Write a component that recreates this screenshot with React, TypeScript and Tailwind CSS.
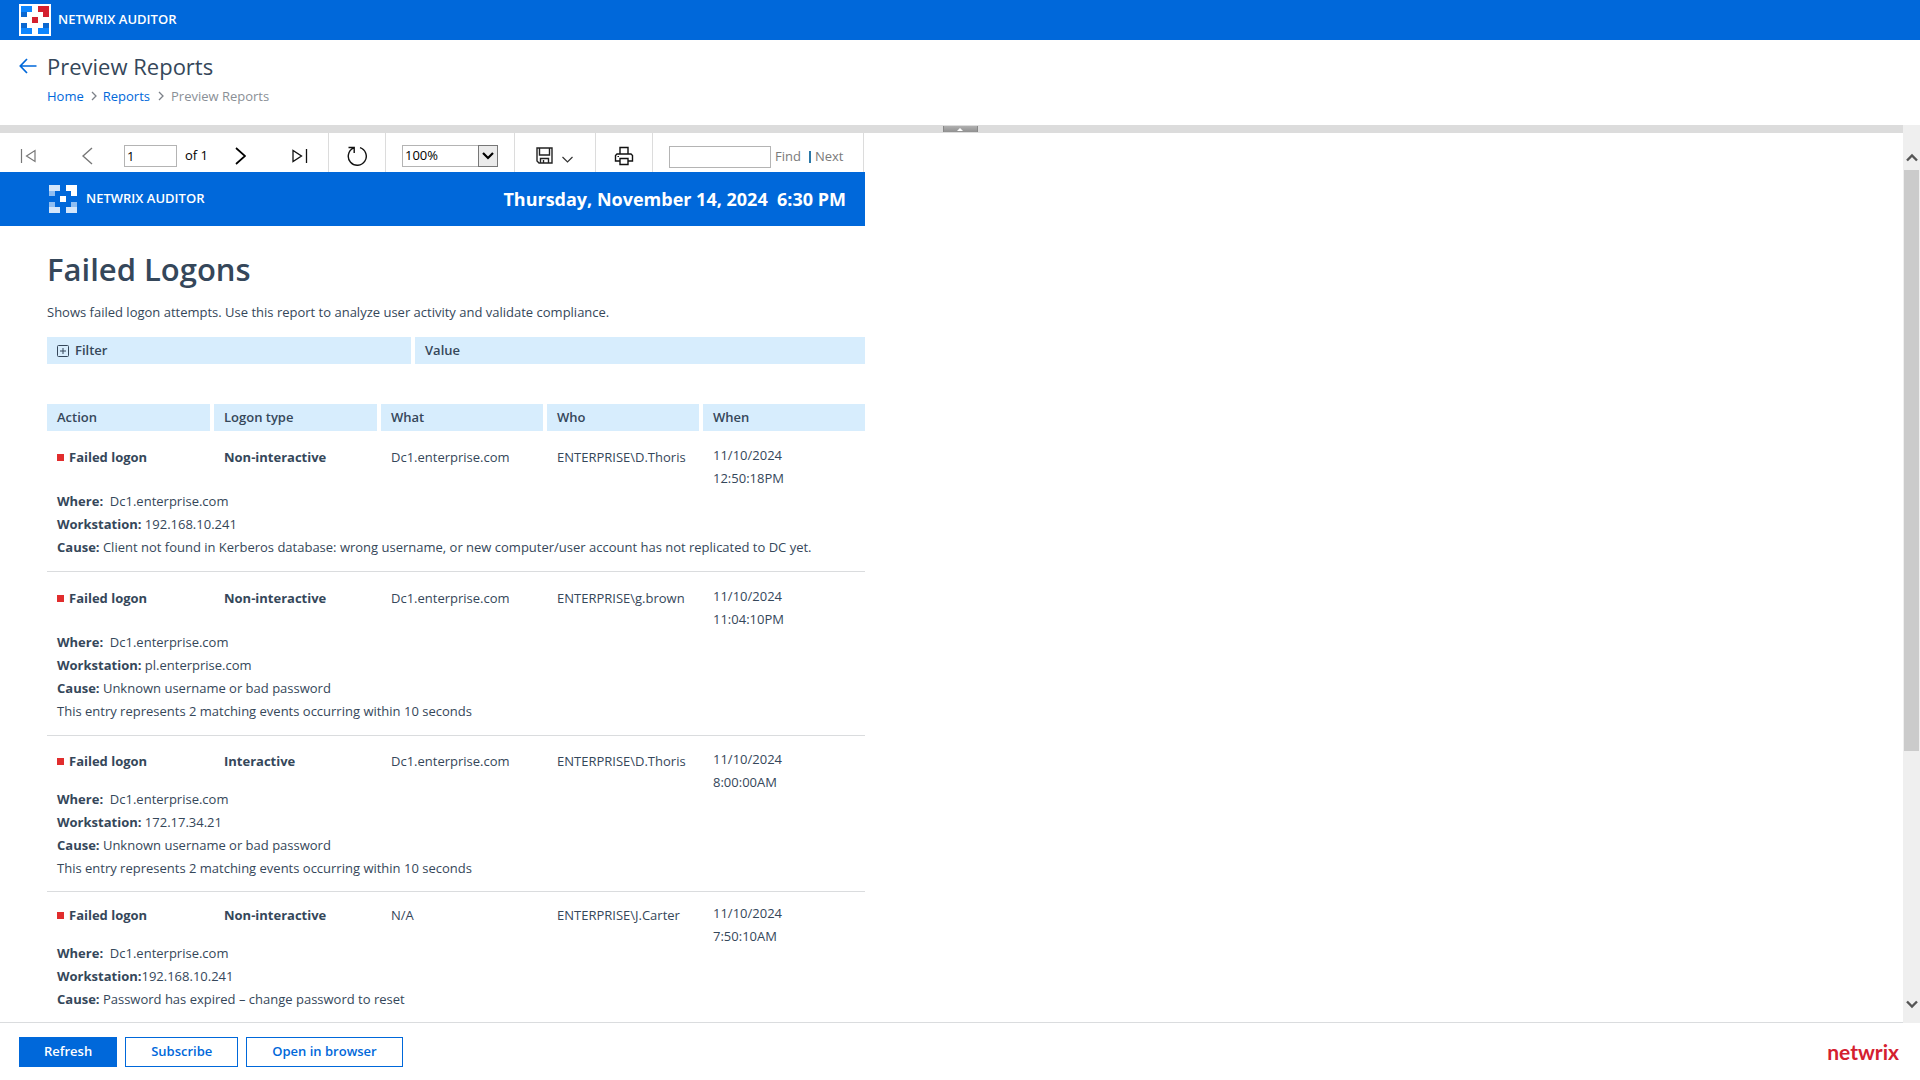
import { ReactNode } from 'react'

type LogonRecord = {
  type: string
  what: string
  who: string
  date: string
  time: string
  details: { label?: string; gap?: string; text: string }[]
  spacing: 'wide' | 'medium' | 'tight'
}

const MATCHING = 'This entry represents 2 matching events occurring within 10 seconds'

const RECORDS: LogonRecord[] = [
  {
    type: 'Non-interactive',
    what: 'Dc1.enterprise.com',
    who: 'ENTERPRISE\\D.Thoris',
    date: '11/10/2024',
    time: '12:50:18PM',
    details: [
      { label: 'Where:', gap: '\u00a0 ', text: 'Dc1.enterprise.com' },
      { label: 'Workstation:', gap: ' ', text: '192.168.10.241' },
      {
        label: 'Cause:',
        gap: ' ',
        text: 'Client not found in Kerberos database: wrong username, or new computer/user account has not replicated to DC yet.',
      },
    ],
    spacing: 'wide',
  },
  {
    type: 'Non-interactive',
    what: 'Dc1.enterprise.com',
    who: 'ENTERPRISE\\g.brown',
    date: '11/10/2024',
    time: '11:04:10PM',
    details: [
      { label: 'Where:', gap: '\u00a0 ', text: 'Dc1.enterprise.com' },
      { label: 'Workstation:', gap: ' ', text: 'pl.enterprise.com' },
      { label: 'Cause:', gap: ' ', text: 'Unknown username or bad password' },
      { text: MATCHING },
    ],
    spacing: 'wide',
  },
  {
    type: 'Interactive',
    what: 'Dc1.enterprise.com',
    who: 'ENTERPRISE\\D.Thoris',
    date: '11/10/2024',
    time: '8:00:00AM',
    details: [
      { label: 'Where:', gap: '\u00a0 ', text: 'Dc1.enterprise.com' },
      { label: 'Workstation:', gap: ' ', text: '172.17.34.21' },
      { label: 'Cause:', gap: ' ', text: 'Unknown username or bad password' },
      { text: MATCHING },
    ],
    spacing: 'medium',
  },
  {
    type: 'Non-interactive',
    what: 'N/A',
    who: 'ENTERPRISE\\J.Carter',
    date: '11/10/2024',
    time: '7:50:10AM',
    details: [
      { label: 'Where:', gap: '\u00a0 ', text: 'Dc1.enterprise.com' },
      { label: 'Workstation:', gap: '', text: '192.168.10.241' },
      { label: 'Cause:', gap: ' ', text: 'Password has expired – change password to reset' },
    ],
    spacing: 'tight',
  },
]

const ROW_SPACING = {
  wide: { top: 'pt-[13px]', details: 'pb-3' },
  medium: { top: 'pt-3', details: 'pb-[11px] -mt-1.5' },
  tight: { top: 'pt-2.5', details: 'pb-3 -mt-1.5' },
}

function ColorLogo() {
  return (
    <svg width="32" height="32" viewBox="0 0 32 32" aria-hidden="true" shapeRendering="crispEdges">
      <path fill="#fff" d="M0 0h32v32H0z" />
      <path fill="#0d86ff" d="M2 2h11v6H2zM2 24h11v6H2zM19 24h11v6H19z" />
      <path fill="#0b67cf" d="M2 8h6v5H2zM2 19h6v5H2zM24 19h6v5h-6z" />
      <path fill="#d4202f" d="M19 2h11v11h-6V8h-5zM13 13h6v6h-6z" />
    </svg>
  )
}

function WhiteLogo() {
  return (
    <svg width="28" height="28" viewBox="0 0 28 28" aria-hidden="true" shapeRendering="crispEdges">
      <path fill="#d3e6fb" d="M0 0h11v6H0zM0 22h11v6H0zM17 22h11v6H17z" />
      <path fill="#8fbef2" d="M0 6h6v5H0zM0 17h6v5H0zM22 17h6v5h-6z" />
      <path fill="#fff" d="M17 0h11v11h-6V6h-5zM11 11h6v6h-6z" />
    </svg>
  )
}

function Crumb() {
  return (
    <svg width="6" height="10" viewBox="0 0 6 10" fill="none" stroke="#7c8188" strokeWidth="1.300" aria-hidden="true">
      <path d="M1 1l4 4-4 4" />
    </svg>
  )
}

function IconButton({ label, className = '', children }: { label: string; className?: string; children: ReactNode }) {
  return (
    <button type="button" aria-label={label} className={`flex shrink-0 items-center ${className}`}>
      {children}
    </button>
  )
}

function Toolbar() {
  return (
    <div className="flex h-[39px] w-full max-w-[864px] shrink-0 border-r border-[#dcdcdc] text-[13px] text-black">
      <div className="flex w-[329px] shrink-0 items-center border-r border-[#dcdcdc] pt-1.5 pl-5">
        <IconButton label="First page">
          <svg width="16" height="16" viewBox="0 0 16 16" fill="none" stroke="#777" strokeWidth="1.2">
            <path d="M1.500 1v14M15 2.500v11L6.500 8z" />
          </svg>
        </IconButton>
        <IconButton label="Previous page" className="ml-[46px]">
          <svg width="11" height="18" viewBox="0 0 11 18" fill="none" stroke="#777" strokeWidth="1.4">
            <path d="M10 1L1 9l9 8" />
          </svg>
        </IconButton>
        <input
          aria-label="Current page"
          defaultValue="1"
          className="ml-[31px] h-[22px] w-[53px] shrink-0 border border-[#b4b4b4] px-0.5 outline-none"
        />
        <span className="ml-2 w-[22px] shrink-0 whitespace-nowrap">of 1</span>
        <IconButton label="Next page" className="ml-7">
          <svg width="11" height="18" viewBox="0 0 11 18" fill="none" stroke="#000" strokeWidth="1.7">
            <path d="M1 1l9 8-9 8" />
          </svg>
        </IconButton>
        <IconButton label="Last page" className="ml-[46px]">
          <svg width="16" height="16" viewBox="0 0 16 16" fill="none" stroke="#111" strokeWidth="1.3">
            <path d="M14.500 1v14M1 2.500v11L9.500 8z" />
          </svg>
        </IconButton>
      </div>
      <div className="flex w-[57px] shrink-0 items-center justify-center border-r border-[#dcdcdc] pt-1.5">
        <IconButton label="Refresh report">
          <svg width="20" height="20" viewBox="0 0 20 20" fill="none" stroke="#111" strokeWidth="1.4">
            <path d="M13 1.700A9 9 0 1 1 6.300 2.200M1.500 1.500h5.700v5.500" />
          </svg>
        </IconButton>
      </div>
      <div className="flex w-[129px] shrink-0 items-center border-r border-[#dcdcdc] pt-1.5 pl-4">
        <div className="relative h-[22px] w-24">
          <select
            aria-label="Zoom"
            className="h-full w-full appearance-none border border-[#b4b4b4] bg-white pl-0.5 outline-none"
          >
            <option>100%</option>
          </select>
          <span className="pointer-events-none absolute inset-y-0 right-0 flex w-5 items-center justify-center border border-[#777] bg-[#ebebeb]">
            <svg width="12" height="8" viewBox="0 0 12 8" fill="none" stroke="#000" strokeWidth="2.200">
              <path d="M1 1l5 5 5-5" />
            </svg>
          </span>
        </div>
      </div>
      <div className="flex w-[81px] shrink-0 items-center border-r border-[#dcdcdc] pt-1.5 pl-[21px]">
        <IconButton label="Export" className="gap-[9px]">
          <svg width="17" height="17" viewBox="0 0 17 17" fill="none" stroke="#222" strokeWidth="1.400">
            <path d="M1 1h15v15H3l-2-2zM3.500 1v7h10V1M4.500 16v-4.500h8V16M7.500 13v3" />
          </svg>
          <svg width="11" height="7" viewBox="0 0 11 7" fill="none" stroke="#333" strokeWidth="1.200" className="mt-2">
            <path d="M.5 1l5 5 5-5" />
          </svg>
        </IconButton>
      </div>
      <div className="flex w-[57px] shrink-0 items-center justify-center border-r border-[#dcdcdc] pt-1.5">
        <IconButton label="Print">
          <svg width="20" height="20" viewBox="0 0 20 20" fill="none" stroke="#111" strokeWidth="1.400">
            <path d="M6 8V1.500h8V8M6 15H1.500v-5.500L3 8h14l1.500 1.500V15H14M6 12.500h8v6H6z" />
            <path d="M3.500 10.500h1.500" strokeWidth="1" />
          </svg>
        </IconButton>
      </div>
      <div className="flex items-center pt-2 pl-4 text-[#7a7a7a]">
        <input aria-label="Find text" className="h-[22px] w-[102px] border border-[#b4b4b4] px-1 outline-none" />
        <button type="button" className="ml-1">
          Find
        </button>
        <span className="ml-2 h-3 w-0.5 bg-[#2a78a8]" />
        <button type="button" className="ml-1">
          Next
        </button>
      </div>
    </div>
  )
}

function RecordRows({ record, last }: { record: LogonRecord; last: boolean }) {
  const s = ROW_SPACING[record.spacing]
  return (
    <>
      <tr className="align-top leading-[23px]">
        <td className={`${s.top} pl-2.5 font-bold`}>
          <div className="flex items-center pt-0.5">
            <span className="mr-[5px] size-[7px] bg-[#e12d2d]" />
            Failed logon
          </div>
        </td>
        <td className={`${s.top} pl-2.5 font-bold`}>
          <div className="pt-0.5">{record.type}</div>
        </td>
        <td className={`${s.top} pl-2.5`}>
          <div className="pt-0.5">{record.what}</div>
        </td>
        <td className={`${s.top} pl-2.5`}>
          <div className="pt-0.5">{record.who}</div>
        </td>
        <td className={`${s.top} pl-2.5`}>
          <div>{record.date}</div>
          <div>{record.time}</div>
        </td>
      </tr>
      <tr>
        <td colSpan={5} className={`pl-2.5 leading-[23px] ${last ? '' : 'border-b border-[#dadcde]'}`}>
          <div className={s.details}>
            {record.details.map((d, i) => (
              <div key={i}>
                {d.label && <b>{d.label}</b>}
                {d.gap}
                {d.text}
              </div>
            ))}
          </div>
        </td>
      </tr>
    </>
  )
}

function Report() {
  const th = 'h-[27px] border-r-4 border-white bg-[#d7edfd] pl-2.5 text-left font-semibold'
  const thLast = 'h-[27px] bg-[#d7edfd] pl-2.5 text-left font-semibold'
  return (
    <article className="w-full max-w-[865px] text-[13px] text-[#35475a]">
      <header className="flex h-[54px] items-center bg-[#0068da] pr-[19px] pl-[49px] text-white">
        <WhiteLogo />
        <span className="ml-[9px] font-semibold">NETWRIX AUDITOR</span>
        <span className="ml-auto text-lg font-bold whitespace-pre">Thursday, November 14, 2024  6:30 PM</span>
      </header>
      <div className="pl-[47px]">
        <h2 className="pt-5 text-[31px] leading-[46px] font-semibold">Failed Logons</h2>
        <p className="pt-2.5 leading-[20px]">
          Shows failed logon attempts. Use this report to analyze user activity and validate compliance.
        </p>
        <table className="mt-[15px] w-full table-fixed border-separate border-spacing-0">
          <thead>
            <tr>
              <th className={`${th} w-[368px]`}>
                <button type="button" aria-label="Expand filter" className="mr-1.5 align-[-2px]">
                  <svg width="12" height="12" viewBox="0 0 12 12" fill="none" stroke="#35475a">
                    <rect x=".5" y=".5" width="11" height="11" rx="1" />
                    <path d="M6 3v6M3 6h6" />
                  </svg>
                </button>
                Filter
              </th>
              <th className={thLast}>Value</th>
            </tr>
          </thead>
        </table>
        <table className="mt-10 w-full table-fixed border-separate border-spacing-0">
          <thead>
            <tr>
              <th className={`${th} w-[167px]`}>Action</th>
              <th className={`${th} w-[167px]`}>Logon type</th>
              <th className={`${th} w-[166px]`}>What</th>
              <th className={`${th} w-[156px]`}>Who</th>
              <th className={thLast}>When</th>
            </tr>
          </thead>
          <tbody>
            {RECORDS.map((r, i) => (
              <RecordRows key={r.date + r.time} record={r} last={i === RECORDS.length - 1} />
            ))}
          </tbody>
        </table>
      </div>
    </article>
  )
}

function ScrollBar() {
  return (
    <div className="flex w-[17px] shrink-0 flex-col items-center bg-[#efefef]" aria-hidden="true">
      <div className="flex h-[45px] shrink-0 items-end pb-2">
        <svg width="12" height="9" viewBox="0 0 12 9" fill="none" stroke="#555" strokeWidth="2.400">
          <path d="M1 7.500l5-5 5 5" />
        </svg>
      </div>
      <div className="flex w-full grow flex-col px-px">
        <div className="h-[70%] bg-[#cbcbcb]" />
      </div>
      <div className="flex h-[23px] shrink-0 items-start">
        <svg width="12" height="9" viewBox="0 0 12 9" fill="none" stroke="#555" strokeWidth="2.400">
          <path d="M1 1.500l5 5 5-5" />
        </svg>
      </div>
    </div>
  )
}

export default function App() {
  return (
    <div className="flex h-screen flex-col overflow-hidden bg-white font-['Open_Sans',sans-serif] text-[13px] text-[#35475a]">
      <header className="flex h-10 shrink-0 items-center bg-[#0068da] pl-[19px] text-white">
        <ColorLogo />
        <span className="ml-[7px] font-semibold">NETWRIX AUDITOR</span>
      </header>

      <div className="h-[85px] shrink-0 pt-[11px] pl-[19px]">
        <div className="flex items-center">
          <a href="#back" aria-label="Back">
            <svg width="18" height="16" viewBox="0 0 18 16" fill="none" stroke="#0068da" strokeWidth="1.700">
              <path d="M17.500 8H1.500M8 1L1.300 8 8 15" />
            </svg>
          </a>
          <h1 className="ml-2.5 text-[22px] leading-[30px]">Preview Reports</h1>
        </div>
        <nav className="mt-[5px] flex items-center pl-7 leading-[20px]" aria-label="Breadcrumb">
          <a href="#home" className="text-[#0068da]">
            Home
          </a>
          <span className="mr-1.5 ml-[7px]">
            <Crumb />
          </span>
          <a href="#reports" className="text-[#0068da]">
            Reports
          </a>
          <span className="mr-[7px] ml-2">
            <Crumb />
          </span>
          <span className="text-[#8a8f96]">Preview Reports</span>
        </nav>
      </div>

      <main className="flex min-h-0 grow">
        <div className="flex min-w-0 grow flex-col overflow-hidden border-b border-[#dadcde]">
          <div className="flex h-2 shrink-0 justify-center bg-[#dcdcdc] pl-[17px]">
            <button
              type="button"
              aria-label="Collapse header"
              className="mt-px flex h-1.5 w-[35px] items-center justify-center border-x border-[#888] bg-linear-to-b from-[#b0b0b0] to-[#919191]"
            >
              <svg width="6" height="3" viewBox="0 0 6 3" fill="#fff">
                <path d="M3 0l3 3H0z" />
              </svg>
            </button>
          </div>
          <Toolbar />
          <Report />
        </div>
        <ScrollBar />
      </main>

      <footer className="flex h-[57px] shrink-0 items-center gap-2 pr-[21px] pl-[19px]">
        <button type="button" className="h-[30px] bg-[#0068da] px-[25px] font-semibold text-white">
          Refresh
        </button>
        <button type="button" className="h-[30px] border border-[#0068da] px-[25px] font-semibold text-[#0068da]">
          Subscribe
        </button>
        <button type="button" className="h-[30px] border border-[#0068da] px-[25px] font-semibold text-[#0068da]">
          Open in browser
        </button>
        <span className="ml-auto font-['Lato',sans-serif] text-[21px] leading-none font-bold text-[#d4202f]">netwrix</span>
      </footer>
    </div>
  )
}
